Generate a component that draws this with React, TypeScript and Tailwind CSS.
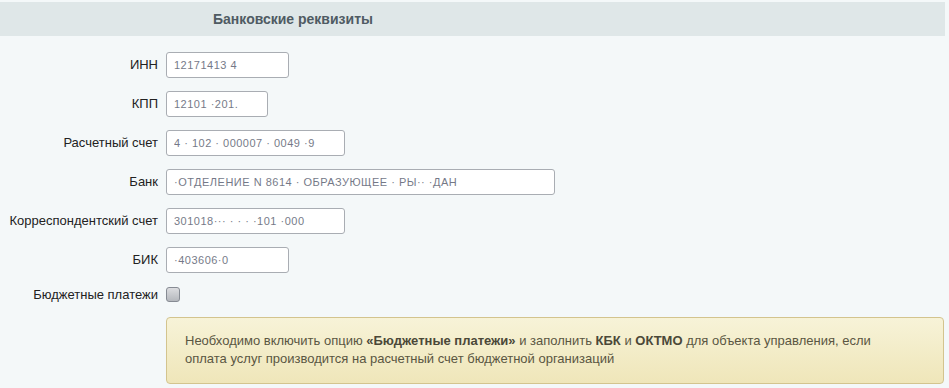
import React from 'react';

const rows = [
  { label: 'ИНН', value: '12171413    4', width: 'w-[123px]' },
  { label: 'КПП', value: '12101 ·201.', width: 'w-[102px]' },
  { label: 'Расчетный счет', value: '4 · 102 · 000007  · 0049 ·9', width: 'w-[179px]' },
  { label: 'Банк', value: '·ОТДЕЛЕНИЕ N 8614 ·  ОБРАЗУЮЩЕЕ  ·  РЫ·· ·ДАН', width: 'w-[389px]' },
  { label: 'Корреспондентский счет', value: '301018··· ·  ·  ·  ·101 ·000', width: 'w-[179px]' },
  { label: 'БИК', value: '·403606·0', width: 'w-[123px]' },
];

export default function App() {
  return (
    <div className="w-[949px] h-[388px] bg-[#f4f8f9] pt-[2px] font-['Liberation_Sans',Arial,sans-serif] overflow-hidden">
      {/* Header */}
      <div className="w-[945px] h-[34px] bg-[#dfe7e8] flex items-center pl-[213px]">
        <span className="text-[14px] font-bold text-[#4f5b63]">Банковские реквизиты</span>
      </div>

      {/* Form */}
      <div className="pt-[16px] flex flex-col gap-[13px]">
        {rows.map((r) => (
          <div key={r.label} className="flex items-center gap-[8px]">
            <label className="w-[158px] text-right text-[13px] text-[#222] whitespace-nowrap">{r.label}</label>
            <div
              className={`${r.width} h-[26px] bg-white border border-[#a9adb3] rounded-[3px] flex items-center pl-[7px] overflow-hidden`}
            >
              <span className="text-[11px] text-[#3a3f55] tracking-[0.5px] whitespace-nowrap opacity-70">{r.value}</span>
            </div>
          </div>
        ))}
      </div>

      <div className="mt-[12px] flex items-center gap-[8px]">
        <label className="w-[158px] text-right text-[13px] text-[#222] whitespace-nowrap">Бюджетные платежи</label>
        <span className="w-[14px] h-[15px] rounded-[3px] border border-[#868b93] bg-gradient-to-b from-[#dcdde0] to-[#b5b8bd]" />
      </div>

      {/* Notice */}
      <div className="ml-[166px] mt-[12px] w-[778px] h-[67px] rounded-[4px] border border-[#d3c48e] bg-gradient-to-b from-[#f7f3d8] to-[#efe6b9] pl-[18px] pr-[20px] pt-[14px]">
        <p className="text-[13px] leading-[18px] text-[#5a5642] whitespace-nowrap">
          Необходимо включить опцию <b className="text-[#4b4838]">«Бюджетные платежи»</b> и заполнить{' '}
          <b className="text-[#4b4838]">КБК</b> и <b className="text-[#4b4838]">ОКТМО</b> для объекта управления, если
          <br />
          оплата услуг производится на расчетный счет бюджетной организаций
        </p>
      </div>
    </div>
  );
}
